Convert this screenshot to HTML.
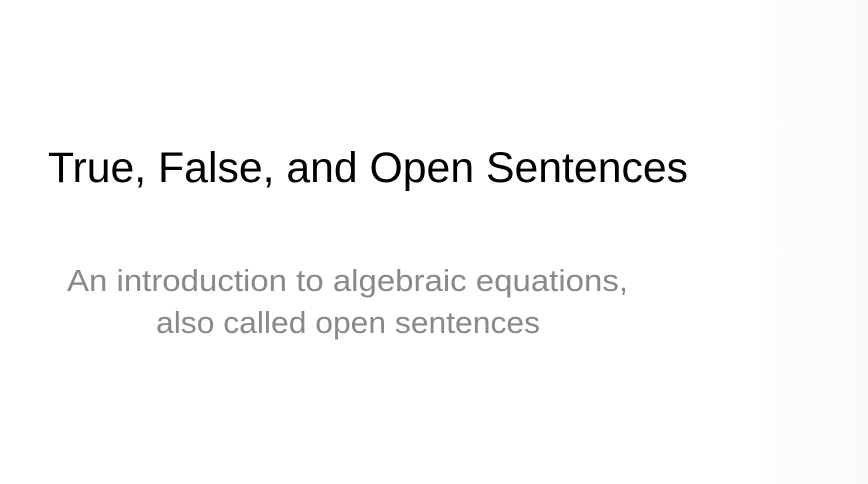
<!DOCTYPE html>
<html><head><style>
html,body{margin:0;padding:0;width:868px;height:484px;overflow:hidden;background:#fff}
.r{position:absolute;left:767px;top:0;width:101px;height:484px;background:linear-gradient(90deg,#fdfdfd,#fafafa)}
svg{position:absolute;left:0;top:0}
</style></head><body>
<div class="r"></div>
<svg width="868" height="484" xmlns="http://www.w3.org/2000/svg">
<text x="48" y="182" font-family="Liberation Sans, sans-serif" font-size="43" fill="#000" textLength="640" lengthAdjust="spacingAndGlyphs">True, False, and Open Sentences</text>
<text x="67" y="291" font-family="Liberation Sans, sans-serif" font-size="31" fill="#898989" textLength="561" lengthAdjust="spacingAndGlyphs">An introduction to algebraic equations,</text>
<text x="156" y="333" font-family="Liberation Sans, sans-serif" font-size="31" fill="#898989" textLength="384" lengthAdjust="spacingAndGlyphs">also called open sentences</text>
</svg>
</body></html>
